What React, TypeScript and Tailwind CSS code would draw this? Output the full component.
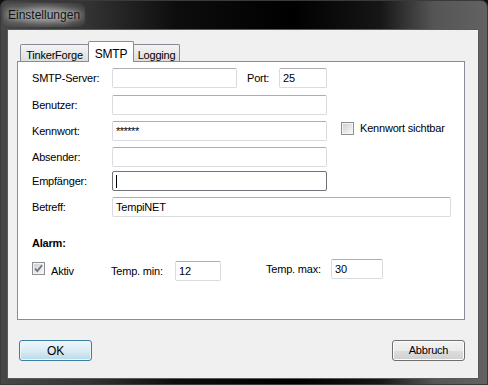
import React from "react";

const font = { fontFamily: '"Liberation Sans", Arial, sans-serif' };

function TextBox({ w, value, focused, children }: { w: string; value?: string; focused?: boolean; children?: React.ReactNode }) {
  return (
    <div
      className={
        "flex h-[20px] items-center rounded-[2px] border bg-white pl-[3px] text-black " +
        w +
        (focused
          ? " border-[#6f747a]"
          : " border-[#d9dbe1] border-t-[#abadb3]")
      }
    >
      {value}
      {children}
    </div>
  );
}

function CheckBox({ checked }: { checked?: boolean }) {
  return (
    <div className="flex h-[13px] w-[13px] items-center justify-center border border-[#8e8f8f] bg-white">
      <div className="relative h-[11px] w-[11px] border border-[#f4f4f4] bg-gradient-to-br from-[#d2d2d2] to-[#f6f6f6]">
        {checked && (
          <svg viewBox="0 0 11 11" className="absolute -left-px -top-px h-[11px] w-[11px]">
            <path d="M2 5.5 L4.3 8 L9 2.2" fill="none" stroke="#6b7480" strokeWidth="1.8" />
          </svg>
        )}
      </div>
    </div>
  );
}

function Tab({ label, active, w }: { label: string; active?: boolean; w: string }) {
  if (active) {
    return (
      <div
        className={
          "relative z-10 -mx-px flex h-[21px] items-start justify-center rounded-t-[2px] border border-b-0 border-[#898c95] bg-white pt-[3px] text-[12px] " +
          w
        }
      >
        {label}
      </div>
    );
  }
  return (
    <div
      className={
        "flex h-[18px] items-start justify-center rounded-t-[2px] border border-b-0 border-[#898c95] bg-gradient-to-b from-[#f4f4f4] to-[#dcdcdc] pt-[2px] " +
        w
      }
    >
      {label}
    </div>
  );
}

export default function App() {
  return (
    <div
      className="h-[385px] w-[488px] overflow-hidden bg-[#111]"
      style={font}
    >
      <div className="flex h-[385px] w-[488px] flex-col rounded-t-[7px] border border-[#3a3a3a] bg-[linear-gradient(to_right,#474747_0%,#333_18%,#0d0d0d_36%,#000_60%,#161616_78%,#555_89%,#626262_100%)]">
        <div className="flex h-[28px] items-center pl-[2px]">
          <div className="flex h-[24px] items-center rounded-[6px] bg-[radial-gradient(ellipse_at_center,rgba(150,150,150,0.85)_30%,rgba(120,120,120,0.4)_65%,rgba(90,90,90,0)_100%)] px-[5px] text-[12px] text-[#111] [text-shadow:0_0_5px_#c8c8c8,0_0_8px_#aaa]">
            Einstellungen
          </div>
        </div>
        <div className="flex flex-1 pl-[6px] pr-[8px] pb-[5px]">
          <div className="flex flex-1 flex-col border border-[#5a5a5a] bg-[#f0f0f0] text-[11px] tracking-[-0.2px] text-black">
            {/* tabs */}
            <div className="mt-[11px] flex items-end pl-[12px]">
              <Tab label="TinkerForge" w="w-[69px]" />
              <Tab label="SMTP" active w="w-[46px]" />
              <Tab label="Logging" w="w-[47px]" />
            </div>
            <div className="relative z-0 -mt-px ml-[9px] flex h-[259px] w-[448px] flex-col border border-[#898c95] bg-white pl-[14px]">
              <div className="mt-[6px] flex h-[20px] items-center">
                <div className="w-[80px]">SMTP-Server:</div>
                <TextBox w="w-[125px]" />
                <div className="ml-[10px] w-[32px]">Port:</div>
                <TextBox w="w-[48px]" value="25" />
              </div>
              <div className="mt-[7px] flex h-[20px] items-center">
                <div className="w-[80px]">Benutzer:</div>
                <TextBox w="w-[215px]" />
              </div>
              <div className="mt-[6px] flex h-[20px] items-center">
                <div className="w-[80px]">Kennwort:</div>
                <TextBox w="w-[215px]">
                  <span className="text-[11px] tracking-[-0.5px]">******</span>
                </TextBox>
                <div className="ml-[14px] mt-[-6px]">
                  <CheckBox />
                </div>
                <div className="ml-[6px] mt-[-6px]">Kennwort sichtbar</div>
              </div>
              <div className="mt-[6px] flex h-[20px] items-center">
                <div className="w-[80px]">Absender:</div>
                <TextBox w="w-[215px]" />
              </div>
              <div className="mt-[4px] flex h-[20px] items-center">
                <div className="w-[80px]">Empfänger:</div>
                <TextBox w="w-[215px]" focused>
                  <span className="h-[13px] w-px bg-black" />
                </TextBox>
              </div>
              <div className="mt-[6px] flex h-[20px] items-center">
                <div className="w-[80px]">Betreff:</div>
                <TextBox w="w-[339px]" value="TempiNET" />
              </div>
              <div className="mt-[19px] h-[14px] font-bold leading-[14px]">Alarm:</div>
              <div className="mt-[11px] flex h-[20px] items-center">
                <div className="flex w-[79px] items-center">
                  <div className="mt-[-6px]">
                    <CheckBox checked />
                  </div>
                  <div className="ml-[6px]">Aktiv</div>
                </div>
                <div className="w-[64px]">Temp. min:</div>
                <TextBox w="w-[46px]" value="12" />
                <div className="ml-[45px] flex -translate-y-[2px] items-center">
                  <div className="w-[65px]">Temp. max:</div>
                  <TextBox w="w-[52px]" value="30" />
                </div>
              </div>
            </div>
            <div className="mt-[20px] flex px-[11px] pr-[13px] justify-between">
              <div className="flex h-[21px] w-[73px] items-center justify-center rounded-[3px] border border-[#3c7fa6] bg-gradient-to-b from-[#eef7fb] via-[#dcecf5] to-[#b9d9e8] text-[12px] shadow-[inset_0_0_0_1px_#e9f6fc]">
                OK
              </div>
              <div className="flex h-[21px] w-[73px] items-center justify-center rounded-[3px] border border-[#707070] bg-[linear-gradient(to_bottom,#f2f2f2_0%,#ebebeb_50%,#dddddd_51%,#cfcfcf_100%)] text-[11px] shadow-[inset_0_0_0_1px_#fcfcfc]">
                Abbruch
              </div>
            </div>
          </div>
        </div>
      </div>
    </div>
  );
}
